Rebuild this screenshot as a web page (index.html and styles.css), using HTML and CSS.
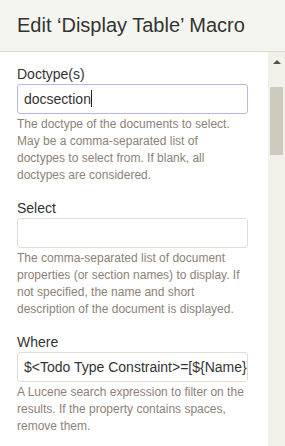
FILE: index.html
```html
<!DOCTYPE html>
<html lang="en">
<head>
    <meta charset="UTF-8">
    <meta name="viewport" content="width=device-width, initial-scale=1.0">
    <title>Edit Macro</title>
    <link rel="stylesheet" href="styles.css">
</head>
<body>
    <div class="dialog">
        <div class="header">Edit &lsquo;Display Table&rsquo; Macro</div>
        <div class="main">
            <div class="form">
                <div class="field">
                    <div class="label">Doctype(s)</div>
                    <div class="input focused">docsection<span class="caret"></span></div>
                    <div class="help">The doctype of the documents to select. May be a comma-separated list of doctypes to select from. If blank, all doctypes are considered.</div>
                </div>
                <div class="field">
                    <div class="label">Select</div>
                    <div class="input"></div>
                    <div class="help">The comma-separated list of document properties (or section names) to display. If not specified, the name and short description of the document is displayed.</div>
                </div>
                <div class="field">
                    <div class="label">Where</div>
                    <div class="input">$&lt;Todo Type Constraint&gt;=[${Name}]</div>
                    <div class="help">A Lucene search expression to filter on the results. If the property contains spaces, remove them.</div>
                </div>
            </div>
            <div class="scrollbar">
                <div class="arrow"></div>
                <div class="thumb"></div>
            </div>
        </div>
    </div>
</body>
</html>
```

FILE: styles.css
```css
body {
    margin: 0;
    background-color: #ffffff;
    font-family: "Liberation Sans", Arial, sans-serif;
}
.dialog {
    width: 285px;
    height: 446px;
    display: flex;
    flex-direction: column;
    overflow: hidden;
}
.header {
    height: 52px;
    box-sizing: border-box;
    padding: 14px 0 0 17px;
    background-color: #f5f5f0;
    border-bottom: 1px solid #dcd9cc;
    font-size: 20px;
    color: #333333;
    flex-shrink: 0;
}
.main {
    flex: 1;
    display: flex;
}
.form {
    flex: 1;
    min-width: 0;
    padding: 13px 20px 0 17px;
}
.field {
    margin-bottom: 15px;
}
.label {
    font-size: 14px;
    line-height: 18px;
    color: #333333;
    margin-bottom: 1px;
}
.input {
    height: 30px;
    box-sizing: border-box;
    border: 1px solid #e0ddd3;
    border-radius: 3px;
    padding: 0 6px;
    font-size: 14px;
    line-height: 28px;
    color: #333333;
    white-space: nowrap;
    overflow: hidden;
}
.input.focused {
    border-color: #b8b6ec;
}
.caret {
    display: inline-block;
    width: 1px;
    height: 17px;
    background-color: #222222;
    vertical-align: -3px;
}
.help {
    margin-top: 2px;
    font-size: 12px;
    line-height: 17px;
    color: #8c8278;
}
.scrollbar {
    width: 17px;
    flex-shrink: 0;
    background-color: #f1f1ea;
    display: flex;
    flex-direction: column;
    align-items: center;
}
.arrow {
    margin-top: 8px;
    width: 0;
    height: 0;
    border-left: 4px solid transparent;
    border-right: 4px solid transparent;
    border-bottom: 4px solid #505050;
}
.thumb {
    margin-top: 23px;
    width: 13px;
    height: 68px;
    background-color: #cdcbbd;
}
```
